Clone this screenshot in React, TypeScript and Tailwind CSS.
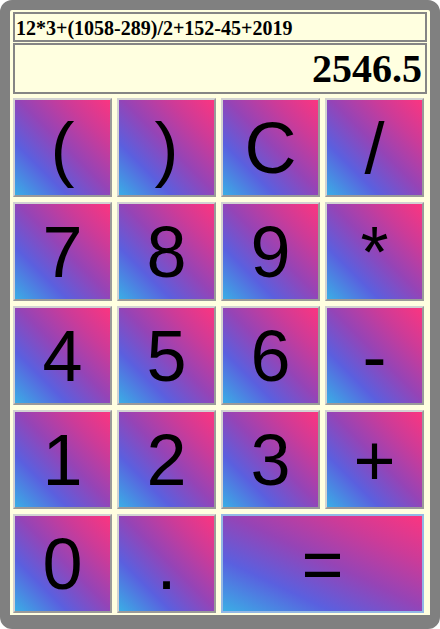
import React from "react";

const keys: { label: string; wide?: boolean; eq?: boolean }[] = [
  { label: "(" },
  { label: ")" },
  { label: "C" },
  { label: "/" },
  { label: "7" },
  { label: "8" },
  { label: "9" },
  { label: "*" },
  { label: "4" },
  { label: "5" },
  { label: "6" },
  { label: "-" },
  { label: "1" },
  { label: "2" },
  { label: "3" },
  { label: "+" },
  { label: "0" },
  { label: "." },
  { label: "=", wide: true, eq: true },
];

export default function App() {
  return (
    <div className="w-[440px] h-[629px] bg-white">
      <div className="w-[440px] h-[629px] rounded-[12px] border-[#808080] border-t-[10px] border-l-[10px] border-r-[10px] border-b-[14px] bg-[#ffffe0] pt-[2px] pl-[3px] pr-[3px] flex flex-col">
        <div className="flex flex-col gap-[1px]">
          <div className="h-[30px] border-2 border-[#858585] flex items-center pl-[1px] pt-[1px] font-['Liberation_Serif',serif] font-bold text-[20px] leading-none text-black whitespace-nowrap overflow-hidden">
            12*3+(1058-289)/2+152-45+2019
          </div>
          <div className="h-[51px] border-2 border-[#858585] flex items-center justify-end pr-[3px] font-['Liberation_Serif',serif] font-bold text-[40px] leading-none text-black">
            2546.5
          </div>
        </div>
        <div className="mt-[4px] grid grid-cols-[repeat(4,99px)] grid-rows-[repeat(5,99px)] gap-[5px]">
          {keys.map((k) => (
            <div
              key={k.label}
              className={
                (k.wide ? "col-span-2 " : "") +
                (k.eq
                  ? "border-2 border-[#93b8e6] "
                  : "border-2 border-t-[#d2d2d2] border-l-[#d2d2d2] border-b-[#9a9a9a] border-r-[#9a9a9a] ") +
                "flex items-center justify-center bg-[linear-gradient(to_top_right,#3aaee5_0%,#5a60df_27%,#9544b6_52%,#cc3b98_76%,#fb3580_100%)] font-['Liberation_Sans',Arial,sans-serif] text-[72px] leading-none text-black"
              }
            >
              {k.label}
            </div>
          ))}
        </div>
      </div>
    </div>
  );
}
